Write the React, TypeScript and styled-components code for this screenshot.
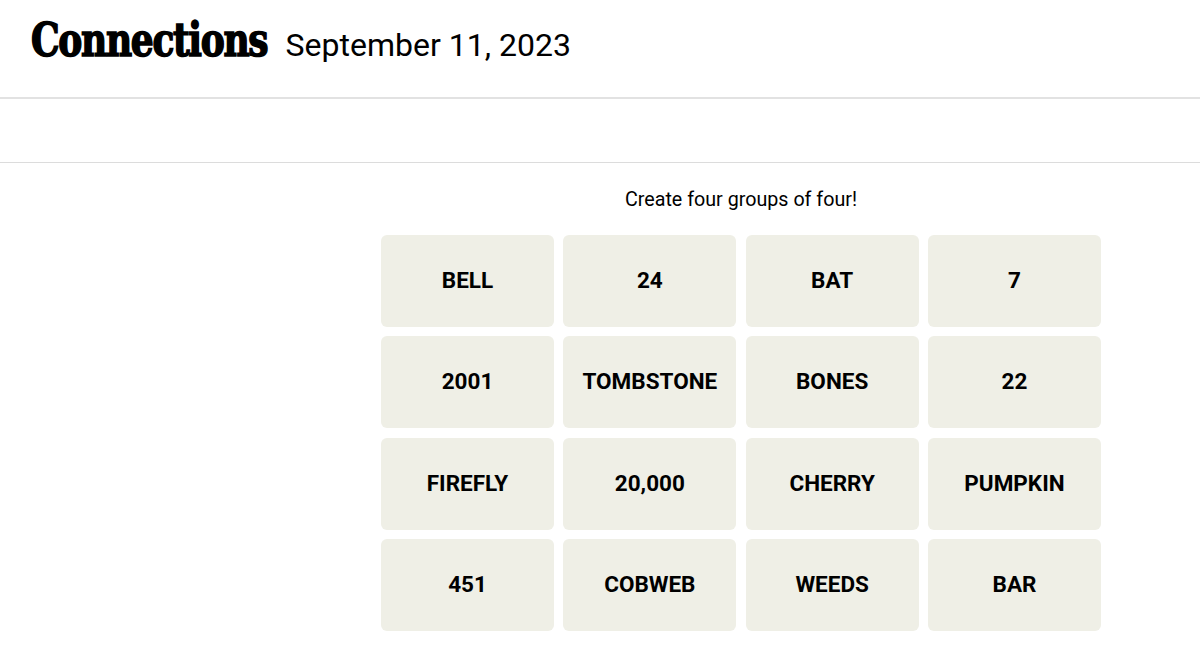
import React from "react";
import styled, { createGlobalStyle } from "styled-components";

const words = [
  "BELL", "24", "BAT", "7",
  "2001", "TOMBSTONE", "BONES", "22",
  "FIREFLY", "20,000", "CHERRY", "PUMPKIN",
  "451", "COBWEB", "WEEDS", "BAR",
];

const GlobalStyle = createGlobalStyle`
  body {
    margin: 0;
    background: #fff;
    color: #000;
    font-family: Roboto, "Liberation Sans", sans-serif;
  }
`;

const Header = styled.header`
  display: flex;
  align-items: baseline;
  height: 99px;
  padding: 13px 0 0 31px;
  box-sizing: border-box;
  border-bottom: 2px solid #e2e2e2;
`;

// condensed slab title, squeezed to the logo's width
const Title = styled.h1`
  margin: 0 -17px 0 0;
  font-family: "DejaVu Serif", serif;
  font-stretch: condensed;
  font-weight: 900;
  font-size: 46px;
  letter-spacing: -1.5px;
  -webkit-text-stroke: 1.5px #000;
  white-space: nowrap;
  transform: scaleX(0.87);
  transform-origin: left center;
`;

const DateText = styled.span`
  font-family: Roboto, "Liberation Sans", sans-serif;
  font-weight: 400;
  font-size: 32px;
`;

const AdBand = styled.div`
  height: 63px;
  border-bottom: 1px solid #dcdcdc;
`;

const Main = styled.main`
  display: flex;
  flex-direction: column;
  align-items: center;
  width: 720px;
  margin-left: 381px;
  padding-top: 25px;
`;

const Prompt = styled.p`
  margin: 0 0 23px;
  font-size: 19.7px;
  line-height: 24px;
`;

const Board = styled.div`
  display: grid;
  grid-template-columns: repeat(4, 1fr);
  grid-auto-rows: 92px;
  column-gap: 9.3px;
  row-gap: 9.3px;
  width: 100%;
`;

const Tile = styled.button`
  display: flex;
  align-items: center;
  justify-content: center;
  padding: 0 0 2px;
  border: none;
  border-radius: 6px;
  background: #efefe6;
  color: #000;
  font-family: Roboto, "Liberation Sans", sans-serif;
  font-weight: 700;
  font-size: 22.5px;
  text-transform: uppercase;
  cursor: pointer;
`;

export default function App() {
  return (
    <>
      <GlobalStyle />
      <Header>
        <Title>Connections</Title>
        <DateText>September 11, 2023</DateText>
      </Header>
      <AdBand />
      <Main>
        <Prompt>Create four groups of four!</Prompt>
        <Board>
          {words.map((w) => (
            <Tile key={w}>{w}</Tile>
          ))}
        </Board>
      </Main>
    </>
  );
}
